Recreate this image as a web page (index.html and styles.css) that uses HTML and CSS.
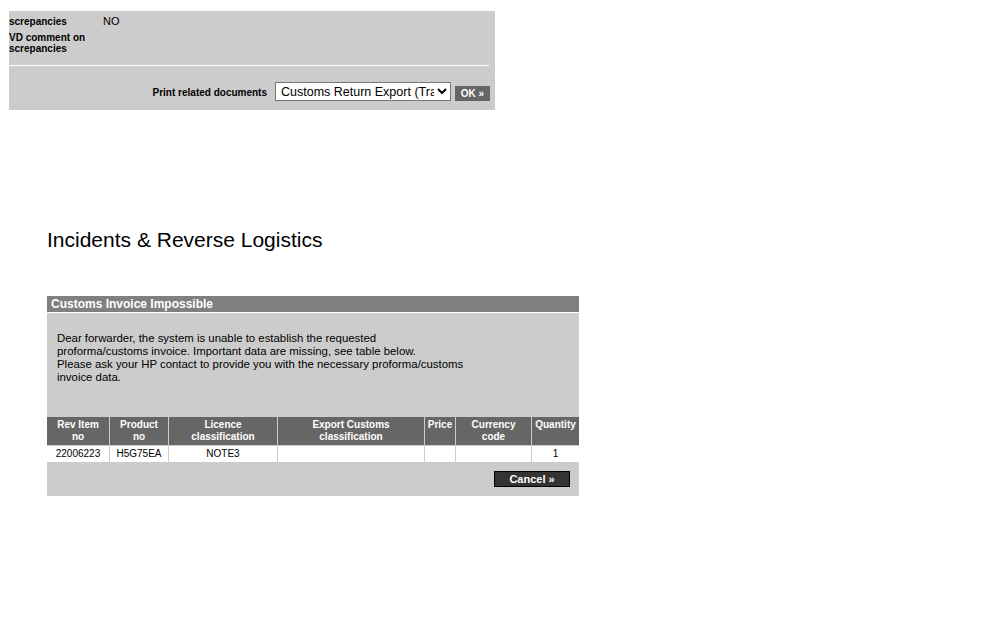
FILE: index.html
```html
<!DOCTYPE html>
<html>
<head>
<meta charset="utf-8">
<title>Incidents &amp; Reverse Logistics</title>
<link rel="stylesheet" href="styles.css">
</head>
<body>
<div class="top">
  <div class="field-row r1">
    <div class="lbl">screpancies</div>
    <div class="val">NO</div>
  </div>
  <div class="field-row r2">
    <div class="lbl">VD comment on<br>screpancies</div>
    <div class="val"></div>
  </div>
  <div class="sep"></div>
  <div class="print-row">
    <span class="print-lbl">Print related documents</span>
    <select class="doc-select">
      <option>Customs Return Export (Trade)</option>
    </select>
    <button class="ok-btn">OK &raquo;</button>
  </div>
</div>

<h1 class="title">Incidents &amp; Reverse Logistics</h1>

<div class="panel">
  <div class="panel-head">Customs Invoice Impossible</div>
  <div class="panel-body">
    <p class="msg">Dear forwarder, the system is unable to establish the requested<br>proforma/customs invoice. Important data are missing, see table below.<br>Please ask your HP contact to provide you with the necessary proforma/customs<br>invoice data.</p>
    <table class="items">
      <colgroup>
        <col class="c1"><col class="c2"><col class="c3"><col class="c4"><col class="c5"><col class="c6"><col class="c7">
      </colgroup>
      <thead>
        <tr>
          <th>Rev Item<br>no</th>
          <th>Product<br>no</th>
          <th>Licence<br>classification</th>
          <th>Export Customs<br>classification</th>
          <th>Price</th>
          <th>Currency<br>code</th>
          <th>Quantity</th>
        </tr>
      </thead>
      <tbody>
        <tr>
          <td>22006223</td>
          <td>H5G75EA</td>
          <td>NOTE3</td>
          <td></td>
          <td></td>
          <td></td>
          <td>1</td>
        </tr>
      </tbody>
    </table>
    <div class="actions">
      <button class="cancel-btn">Cancel &raquo;</button>
    </div>
  </div>
</div>
</body>
</html>
```

FILE: styles.css
```css
html, body {
  margin: 0;
  padding: 0;
  background: #ffffff;
  font-family: Arial, "Liberation Sans", sans-serif;
  color: #000;
}

.top {
  margin: 11px 0 0 9px;
  width: 486px;
  height: 99px;
  background: #cccccc;
  box-sizing: border-box;
  padding-top: 5px;
}

.field-row {
  display: flex;
}

.field-row.r2 {
  margin-top: 5px;
}

.lbl {
  width: 94px;
  font-size: 10px;
  font-weight: bold;
  line-height: 11px;
}

.val {
  font-size: 11px;
  line-height: 12px;
  margin-top: -1px;
}

.sep {
  margin-top: 11px;
  width: 480px;
  height: 1px;
  background: #ffffff;
}

.print-row {
  display: flex;
  justify-content: flex-end;
  align-items: flex-end;
  padding-right: 5px;
  margin-top: 16px;
}

.print-lbl {
  font-size: 10px;
  font-weight: bold;
  line-height: 12px;
  margin-right: 8px;
  margin-bottom: 2px;
}

.doc-select {
  width: 176px;
  height: 19px;
  font-family: Arial, "Liberation Sans", sans-serif;
  font-size: 12.5px;
  padding: 0 0 0 1px;
  margin: 0 4px 0 0;
  border: 1px solid #767676;
  border-radius: 0;
  background: #ffffff;
  color: #000;
}

.ok-btn {
  width: 35px;
  height: 15px;
  padding: 0;
  margin: 0;
  border: none;
  background: #666666;
  color: #ffffff;
  font-family: Arial, "Liberation Sans", sans-serif;
  font-size: 10px;
  font-weight: bold;
  line-height: 15px;
}

.title {
  margin: 118px 0 0 47px;
  font-size: 21px;
  font-weight: normal;
  line-height: 24px;
}

.panel {
  margin: 44px 0 0 47px;
  width: 532px;
  background: #cccccc;
}

.panel-head {
  height: 16px;
  background: #808080;
  color: #ffffff;
  font-size: 12px;
  font-weight: bold;
  line-height: 16px;
  padding-left: 4px;
  border-bottom: 1px solid #ffffff;
}

.panel-body {
  padding: 19px 0 9px 0;
}

.msg {
  margin: 0 0 0 10px;
  font-size: 11.4px;
  line-height: 13px;
}

.items {
  margin: 32px 0 0 -1px;
  width: 533px;
  table-layout: fixed;
  border-collapse: separate;
  border-spacing: 1px;
  font-size: 10px;
}

.c1 { width: 62px; }
.c2 { width: 58px; }
.c3 { width: 108px; }
.c4 { width: 146px; }
.c5 { width: 30px; }
.c6 { width: 75px; }
.c7 { width: 47px; }

.items th {
  background: #666666;
  color: #ffffff;
  font-weight: bold;
  height: 28px;
  padding: 2px 0 0 0;
  box-sizing: border-box;
  vertical-align: top;
  line-height: 12px;
  text-align: center;
}

.items td {
  background: #ffffff;
  height: 16px;
  padding: 0;
  text-align: center;
  line-height: 14px;
  vertical-align: middle;
}

.actions {
  display: flex;
  justify-content: flex-end;
  padding-right: 9px;
  margin-top: 8px;
}

.cancel-btn {
  width: 76px;
  height: 16px;
  padding: 0;
  margin: 0;
  border: 1px solid #000000;
  background: #333333;
  color: #ffffff;
  font-family: Arial, "Liberation Sans", sans-serif;
  font-size: 11px;
  font-weight: bold;
  line-height: 14px;
}
```
